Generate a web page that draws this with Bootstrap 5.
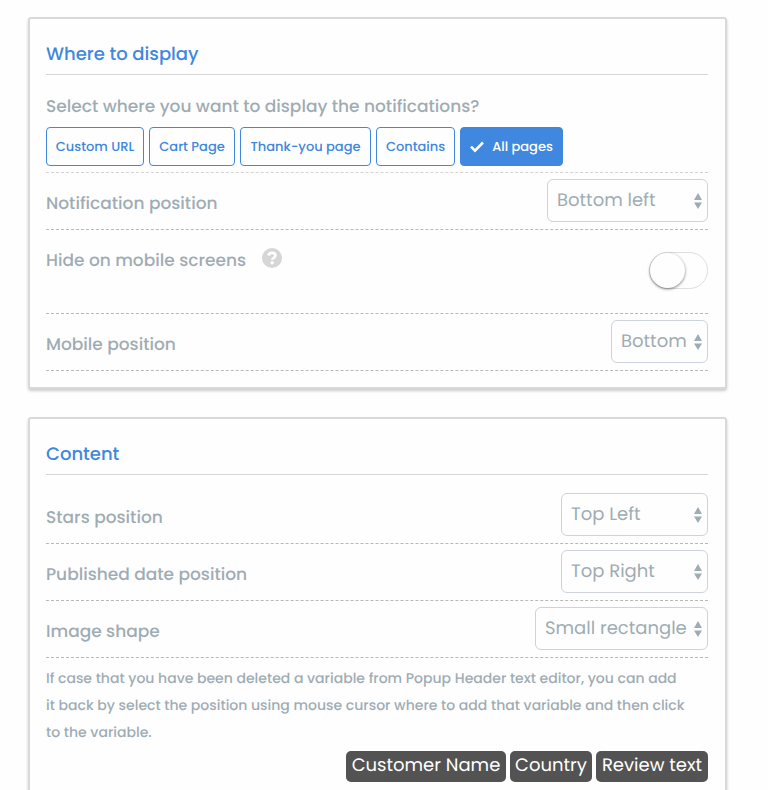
<!DOCTYPE html>
<html lang="en">
<head>
<meta charset="utf-8">
<meta name="viewport" content="width=device-width, initial-scale=1">
<title>Notification settings</title>
<link href="https://cdn.jsdelivr.net/npm/bootstrap@5.3.0/dist/css/bootstrap.min.css" rel="stylesheet">
<style>
  :root { --brand: #3f87df; --muted: #9eacb4; --frame: #d9d9d9; }
  body { font-family: Poppins, Inter, sans-serif; color: var(--muted); background: #fefefe; text-rendering: geometricPrecision; }
  button, select { text-rendering: inherit; }
  .page { padding: 17px 41px 0 28px; }
  .panel { border: 2px solid var(--frame); border-radius: 3px; background: #fefefe; box-shadow: 0 2px 3px rgba(0,0,0,.2); padding: 17px 17px 16px 16px; margin-bottom: 28px; }
  .panel-title { color: var(--brand); font-size: 18px; font-weight: 500; line-height: 38px; border-bottom: 1px solid #d6d6d6; margin: 0; }
  .question, .setting-label { font-size: 17px; font-weight: 500; line-height: 26px; margin: 0; }
  .question { padding-top: 18px; margin-bottom: 8px; }
  .setting { border-bottom: 1px dashed #b8b8b8; padding: 6px 0 7px; }
  .setting-label { padding-top: 11px; }
  .first-setting { padding-top: 18px; }
  .pages { border-bottom: 1px dashed #d3d3d3; padding-bottom: 6px; gap: 5px; }
  .page-btn { --bs-btn-color: var(--brand); --bs-btn-border-color: var(--brand); --bs-btn-hover-bg: var(--brand); --bs-btn-active-bg: var(--brand); --bs-btn-active-border-color: var(--brand); --bs-btn-active-color: #fff;
    font-size: 13px; font-weight: 500; line-height: 21px; padding: 8px 0; border-radius: 4px; }
  .w-a { width: 98px; } .w-b { width: 86px; } .w-c { width: 131px; } .w-d { width: 79px; } .w-e { width: 103px; }
  .picker { appearance: none; color: var(--muted); font-size: 18px; line-height: 28px; height: 43px; padding: 7px 18px 6px 9px; border: 1px solid #cdd2dc; border-radius: 6px;
    background: #fefefe url("data:image/svg+xml,%3Csvg xmlns='http://www.w3.org/2000/svg' viewBox='0 0 8 16'%3E%3Cpath fill='%239eacb4' d='M4 0L0 7h8zm0 16L0 9.500h8z'/%3E%3C/svg%3E") no-repeat right 5px center / 8px 16px; }
  .s-161 { width: 161px; } .s-147 { width: 147px; } .s-97 { width: 97px; } .s-173 { width: 173px; }
  .mobile-row { padding-bottom: 24px; }
  .help { color: #d6d6d6; margin: 12px 0 0 16px; }
  .toggle { appearance: none; width: 59px; height: 37px; margin: 16px 0 0; border: 1px solid #dedede; border-radius: 19px; background: #fefefe; cursor: pointer; }
  .toggle::before { content: ""; display: block; width: 35px; height: 35px; border-radius: 50%; background: #fefefe; box-shadow: 0 1px 3px rgba(0,0,0,.5); }
  .toggle:checked { background: var(--brand); }
  .toggle:checked::before { margin-left: 22px; }
  .hint { font-size: 14px; font-weight: 500; line-height: 27px; margin: 7px 0 5px; padding-right: 22px; }
  .variable { background: #535353; color: #fff; border: 0; border-radius: 5px; font-size: 18px; line-height: 27px; padding: 1px 0 3px; }
  .v-160 { width: 160px; } .v-82 { width: 82px; } .v-112 { width: 112px; }
</style>
</head>
<body>
<main class="page">
  <section class="panel">
    <h2 class="panel-title">Where to display</h2>
    <p class="question">Select where you want to display the notifications?</p>
    <div class="pages d-flex flex-wrap">
      <button type="button" class="btn page-btn w-a">Custom URL</button>
      <button type="button" class="btn page-btn w-b">Cart Page</button>
      <button type="button" class="btn page-btn w-c">Thank-you page</button>
      <button type="button" class="btn page-btn w-d">Contains</button>
      <button type="button" class="btn page-btn w-e active d-flex align-items-center justify-content-center gap-2" aria-pressed="true">
        <svg width="14" height="14" viewBox="0 0 14 14" fill="none" stroke="currentColor" stroke-width="2.6" aria-hidden="true"><path d="M1 6.700l4 4L13 2.500"/></svg>
        All pages
      </button>
    </div>
    <div class="setting d-flex justify-content-between">
      <label class="setting-label" for="pos">Notification position</label>
      <select id="pos" class="picker s-161"><option>Bottom left</option><option>Bottom right</option></select>
    </div>
    <div class="setting mobile-row d-flex justify-content-between">
      <div class="d-flex">
        <label class="setting-label" for="hide">Hide on mobile screens</label>
        <svg class="help" width="20" height="20" viewBox="0 0 20 20" role="img" aria-label="Help"><circle cx="10" cy="10" r="10" fill="currentColor"/><path d="M6.300 7.500C7 5.700 8.300 4.900 10 4.900c2 0 3.400 1 3.400 2.600 0 2.300-3.100 2.200-3.100 4.200" fill="none" stroke="#fefefe" stroke-width="2.700"/><circle cx="10.200" cy="14.800" r="1.800" fill="#fefefe"/></svg>
      </div>
      <input id="hide" class="toggle" type="checkbox" role="switch">
    </div>
    <div class="setting d-flex justify-content-between">
      <label class="setting-label" for="mpos">Mobile position</label>
      <select id="mpos" class="picker s-97"><option>Bottom</option><option>Top</option></select>
    </div>
  </section>

  <section class="panel">
    <h2 class="panel-title">Content</h2>
    <div class="setting first-setting d-flex justify-content-between">
      <label class="setting-label" for="stars">Stars position</label>
      <select id="stars" class="picker s-147"><option>Top Left</option><option>Top Right</option></select>
    </div>
    <div class="setting d-flex justify-content-between">
      <label class="setting-label" for="date">Published date position</label>
      <select id="date" class="picker s-147"><option>Top Right</option><option>Top Left</option></select>
    </div>
    <div class="setting d-flex justify-content-between">
      <label class="setting-label" for="shape">Image shape</label>
      <select id="shape" class="picker s-173"><option>Small rectangle</option><option>Circle</option></select>
    </div>
    <p class="hint">If case that you have been deleted a variable from Popup Header text editor, you can add it back by select the position using mouse cursor where to add that variable and then click to the variable.</p>
    <div class="d-flex flex-wrap justify-content-end gap-1">
      <button type="button" class="variable v-160">Customer Name</button>
      <button type="button" class="variable v-82">Country</button>
      <button type="button" class="variable v-112">Review text</button>
    </div>
  </section>
</main>
<script src="https://cdn.jsdelivr.net/npm/bootstrap@5.3.0/dist/js/bootstrap.bundle.min.js"></script>
</body>
</html>
